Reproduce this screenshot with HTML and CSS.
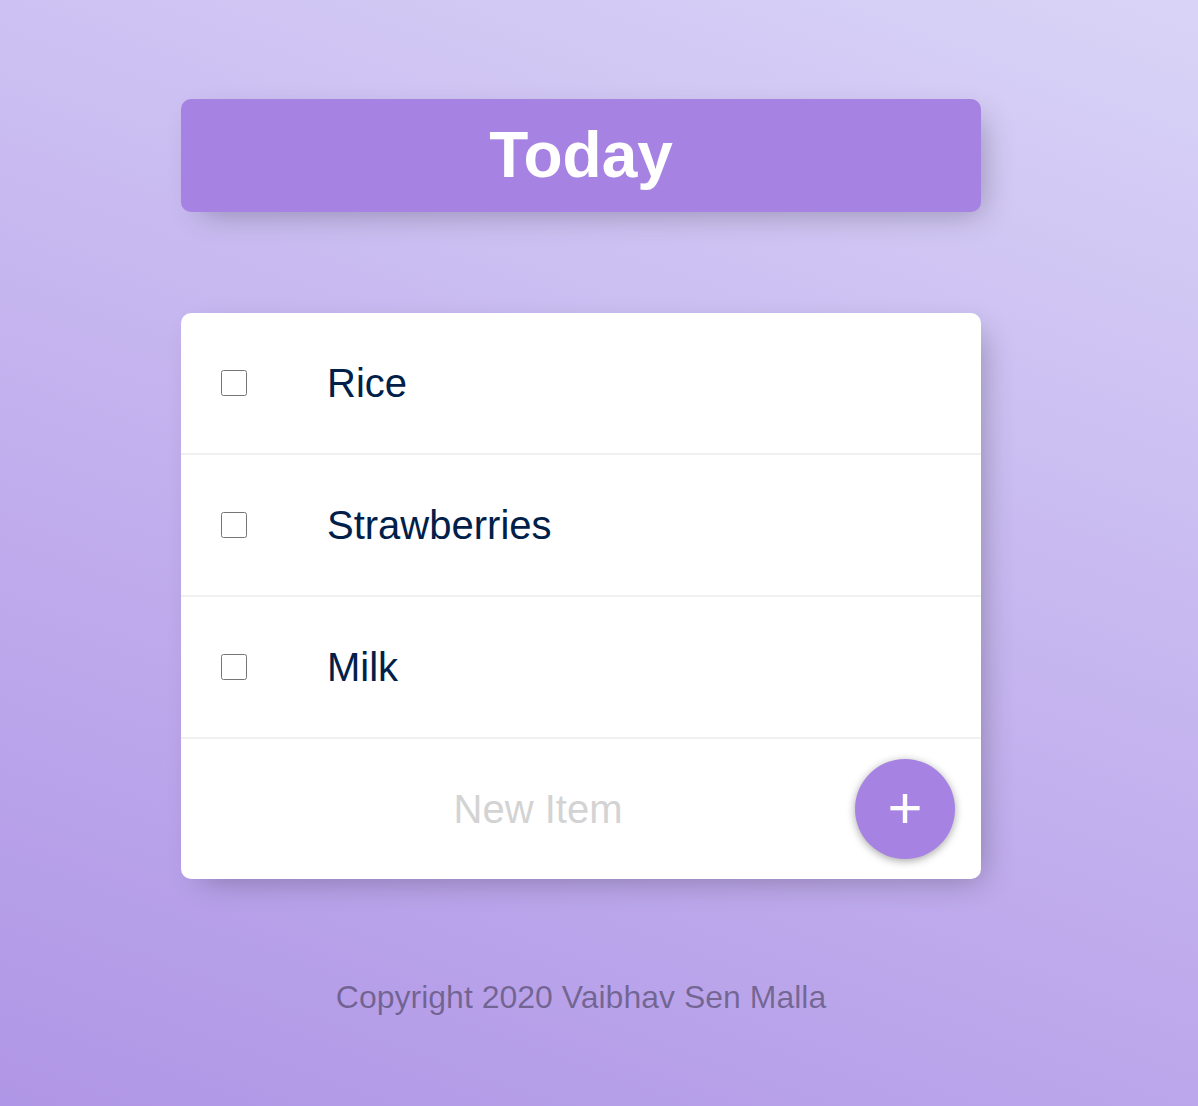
FILE: index.html
```html
<!DOCTYPE html>
<html lang="en">
<head>
<meta charset="utf-8">
<title>To-Do List</title>
<link rel="stylesheet" href="styles.css">
</head>
<body>
  <div class="box heading">
    <h1 class="title">Today</h1>
  </div>
  <div class="box list">
    <div class="item">
      <input class="check" type="checkbox">
      <p class="label">Rice</p>
    </div>
    <div class="item">
      <input class="check" type="checkbox">
      <p class="label">Strawberries</p>
    </div>
    <div class="item">
      <input class="check" type="checkbox">
      <p class="label">Milk</p>
    </div>
    <form class="item new-form">
      <input class="new-input" type="text" name="newItem" placeholder="New Item" autocomplete="off">
      <button class="add-btn" type="button">+</button>
    </form>
  </div>
  <footer class="footer">Copyright 2020 Vaibhav Sen Malla</footer>
</body>
</html>
```

FILE: styles.css
```css
html {
  min-height: 100%;
  background-color: #c6b7f0;
  background-image: linear-gradient(20deg, #b096e6 0%, #c2b0ee 45%, #d9d4f7 100%);
  font-family: "Liberation Sans", Arial, sans-serif;
}

body {
  margin: 0;
  padding: 99px 36px 60px 0;
  min-height: 1106px;
  box-sizing: border-box;
}

.box {
  width: 800px;
  margin: 0 auto;
  background: #ffffff;
  border-radius: 10px;
  box-shadow: 10px 10px 30px -10px rgba(0, 0, 0, 0.3);
}

.heading {
  background-color: #a683e3;
  text-align: center;
}

.title {
  margin: 0;
  padding: 20px;
  color: #ffffff;
  font-size: 64px;
  font-weight: 700;
  line-height: 73px;
}

.list {
  margin-top: 101px;
  margin-bottom: 101px;
}

.item {
  min-height: 140px;
  display: flex;
  align-items: center;
  border-bottom: 2px solid #f1f1f1;
}

.item:last-child {
  border-bottom: 0;
}

.check {
  width: 26px;
  height: 26px;
  margin: 0 40px;
  flex: none;
}

.label {
  margin: 0;
  padding: 40px;
  font-size: 40px;
  color: #00204a;
}

.new-form {
  margin: 0 0 0 40px;
  height: 140px;
}

.new-input {
  width: 626px;
  height: 120px;
  padding: 0 0 0 4px;
  border: none;
  text-align: center;
  font-family: "Liberation Sans", Arial, sans-serif;
  font-size: 40px;
  color: #00204a;
  background: transparent;
}

.new-input::placeholder {
  color: #d3d3d3;
  opacity: 1;
}

.new-input:focus {
  outline: none;
}

.add-btn {
  width: 100px;
  height: 100px;
  margin-left: 4px;
  border: 0;
  border-radius: 50%;
  background-color: #a683e3;
  color: #ffffff;
  font-family: "Liberation Sans", Arial, sans-serif;
  font-size: 60px;
  line-height: 1;
  padding: 0 0 2px;
  box-shadow: 0 2px 8px rgba(0, 0, 0, 0.35);
  flex: none;
}

.footer {
  text-align: center;
  font-size: 32px;
  line-height: 34px;
  color: rgba(0, 0, 0, 0.38);
}
```
